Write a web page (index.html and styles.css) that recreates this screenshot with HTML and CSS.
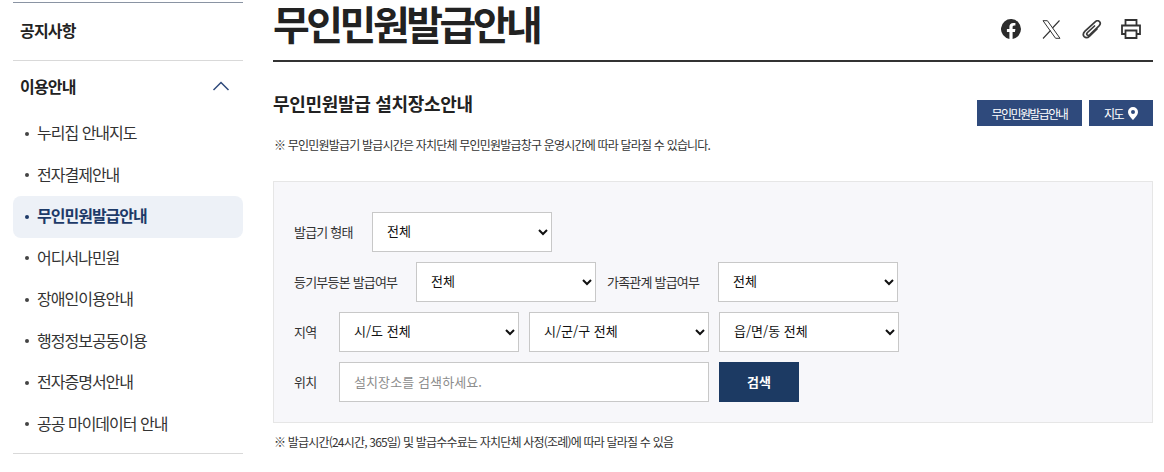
FILE: index.html
```html
<!DOCTYPE html>
<html lang="ko">
<head>
<meta charset="utf-8">
<title>무인민원발급안내</title>
<link rel="stylesheet" href="styles.css">
</head>
<body>
<div class="page">
  <aside class="side">
    <div class="side-top"><a class="side-head">공지사항</a></div>
    <div class="side-group">
      <div class="side-title"><span>이용안내</span>
        <svg class="chev" width="18" height="10" viewBox="0 0 18 10"><path d="M1.500 9L9 1.500 16.500 9" fill="none" stroke="#2f4a7c" stroke-width="1.500"/></svg>
      </div>
      <ul class="side-list">
        <li>누리집 안내지도</li>
        <li>전자결제안내</li>
        <li class="on">무인민원발급안내</li>
        <li>어디서나민원</li>
        <li>장애인이용안내</li>
        <li>행정정보공동이용</li>
        <li>전자증명서안내</li>
        <li>공공 마이데이터 안내</li>
      </ul>
    </div>
  </aside>
  <main class="main">
    <header class="head">
      <h1>무인민원발급안내</h1>
      <div class="tools">
        <svg width="20" height="20" viewBox="0 0 20 20"><path fill="#2b2b2b" d="M20 10a10 10 0 1 0-11.600 9.900v-7H5.900V10h2.500V7.800c0-2.500 1.500-3.900 3.800-3.900 1.100 0 2.200.2 2.200.2v2.500h-1.200c-1.200 0-1.600.8-1.600 1.600V10h2.800l-.5 2.900h-2.300v7A10 10 0 0 0 20 10z"/></svg>
        <svg width="19" height="19" viewBox="0 0 19 19"><path fill="none" stroke="#333" stroke-width="1" d="M1 .7h4.400L18 18.300h-4.400z"/><path fill="none" stroke="#333" stroke-width="1.100" d="M17.500.5L10.500 8M8.500 10.500L1 18.500"/></svg>
        <svg width="20" height="19" viewBox="0 0 20 19"><path fill="none" stroke="#3a3a3a" stroke-width="1.700" stroke-linecap="round" d="M12.500 6L5.500 12.500c-1 1-.9 1.900-.3 2.500.6.600 1.500.6 2.400-.2l9.200-8.700c1.700-1.700 1.800-3.400.7-4.500-1.200-1.200-3-1-4.600.5L3 11.200C1 13.200.9 15.200 2.200 16.600c1.400 1.400 3.500 1.300 5.400-.5L15 9"/></svg>
        <svg class="print" width="20" height="20" viewBox="0 0 20 20"><g fill="none" stroke="#333" stroke-width="1.800"><path d="M4.500 6V1h11v5"/><path d="M4.500 15H1V6.500h18V15h-3.500"/><path d="M4.500 11.500h11V19h-11z"/></g></svg>
      </div>
    </header>
    <section class="info">
      <div class="info-top">
        <h2>무인민원발급 설치장소안내</h2>
        <div class="info-btns">
          <a class="btn">무인민원발급안내</a>
          <a class="btn">지도 <svg width="10" height="13" viewBox="0 0 10 13"><path fill="#fff" fill-rule="evenodd" d="M5 0a5 5 0 0 1 5 5c0 3-3 5.800-5 8-2-2.200-5-5-5-8a5 5 0 0 1 5-5zm0 3a2 2 0 1 0 0 4 2 2 0 0 0 0-4z"/></svg></a>
        </div>
      </div>
      <p class="note note-a">※ 무인민원발급기 발급시간은 자치단체 무인민원발급창구 운영시간에 따라 달라질 수 있습니다.</p>
    </section>
    <form class="search">
      <div class="row">
        <label class="lb">발급기 형태</label>
        <select class="sel"><option>전체</option></select>
      </div>
      <div class="row">
        <label class="lb lb-long">등기부등본 발급여부</label>
        <select class="sel"><option>전체</option></select>
        <label class="lb lb-mid">가족관계 발급여부</label>
        <select class="sel"><option>전체</option></select>
      </div>
      <div class="row">
        <label class="lb lb-short">지역</label>
        <select class="sel"><option>시/도 전체</option></select>
        <select class="sel"><option>시/군/구 전체</option></select>
        <select class="sel"><option>읍/면/동 전체</option></select>
      </div>
      <div class="row">
        <label class="lb lb-short">위치</label>
        <input class="inp" type="text" placeholder="설치장소를 검색하세요.">
        <button class="go" type="button">검색</button>
      </div>
    </form>
    <p class="note note-b">※ 발급시간(24시간, 365일) 및 발급수수료는 자치단체 사정(조례)에 따라 달라질 수 있음</p>
  </main>
</div>
</body>
</html>
```
FILE: styles.css
```css
* { box-sizing: border-box; }
html, body { margin: 0; padding: 0; overflow: hidden; height: 472px; background: #fff; }
body { font-family: "Noto Sans CJK KR", "Noto Sans", sans-serif; color: #222; }
.page { display: flex; gap: 30px; padding: 2px 0 0 13px; }
.side { width: 230px; flex: none; }
.side-top { border-top: 1px solid #8a94a3; border-bottom: 1px solid #d9d9d9; height: 59px; display: flex; align-items: center; padding: 0 0 3px 7px; }
.side-head { font-size: 16px; font-weight: 700; letter-spacing: -0.8px; color: #222; }
.side-group { border-bottom: 1px solid #d9d9d9; height: 393px; }
.side-title { height: 52px; display: flex; justify-content: space-between; align-items: center; padding: 0 13px 3px 7px; font-size: 16px; font-weight: 700; letter-spacing: -0.8px; }
.side-list { list-style: none; margin: 0; padding: 0; }
.side-list li { height: 41.500px; display: flex; align-items: center; padding: 0 0 3px 24px; font-size: 16px; letter-spacing: -1px; color: #333; border-radius: 8px; position: relative; }
.side-list li::before { content: ""; position: absolute; left: 12px; top: 50%; margin-top: -2px; width: 4px; height: 4px; border-radius: 50%; background: #444; }
.side-list li.on { background: #edf1f7; color: #1d3a68; font-weight: 700; }
.side-list li.on::before { background: #1d3a68; }
.main { width: 880px; flex: none; }
.head { margin-top: -2px; border-bottom: 2px solid #333; display: flex; justify-content: space-between; align-items: flex-start; height: 62px; }
h1 { margin: 0; font-size: 40px; font-weight: 700; letter-spacing: -3.500px; color: #222; line-height: 46px; }
.tools { display: flex; gap: 21px; align-items: center; padding: 19px 12px 0 0; }
.print { margin-left: -2px; }
.info-top { display: flex; justify-content: space-between; align-items: flex-start; }
h2 { margin: 28px 0 0; font-size: 18px; font-weight: 700; letter-spacing: -0.3px; line-height: 26px; color: #222; }
.info-btns { display: flex; gap: 7px; margin-top: 38px; }
.btn { height: 26px; padding: 0 15px; background: #2f4a7c; color: #fff; font-size: 12px; letter-spacing: -1.600px; display: flex; align-items: center; gap: 5px; }
.note { margin: 0; padding-left: 1px; font-size: 12px; letter-spacing: -0.8px; color: #333; line-height: 18px; }
.note-a { margin-top: 10px; }
.search { margin-top: 27px; height: 242px; background: #f7f7fa; border: 1px solid #e6e6e6; padding: 30px 20px 0; display: flex; flex-direction: column; gap: 10px; }
.row { display: flex; align-items: center; gap: 10px; height: 40px; }
.lb { font-size: 13px; letter-spacing: -0.8px; color: #333; width: 68px; flex: none; padding-bottom: 1px; }
.lb-long { width: 112px; }
.lb-mid { width: 101px; margin-left: 1px; }
.lb-short { width: 35px; }
.sel { width: 180px; height: 40px; flex: none; padding: 0 10px 3px; border: 1px solid #c8c8c8; border-radius: 0; background: #fff; font-family: inherit; font-size: 13px; color: #111; }
.inp { width: 370px; height: 40px; flex: none; padding: 0 14px 2px; border: 1px solid #c8c8c8; background: #fff; font-family: inherit; font-size: 13px; letter-spacing: 0.1px; }
.inp::placeholder { color: #8c8c8c; }
.go { width: 80px; height: 40px; flex: none; border: 0; padding: 0 0 2px; background: #1c3a63; color: #fff; font-family: inherit; font-size: 13px; font-weight: 700; }
.note-b { margin-top: 10px; }
```
